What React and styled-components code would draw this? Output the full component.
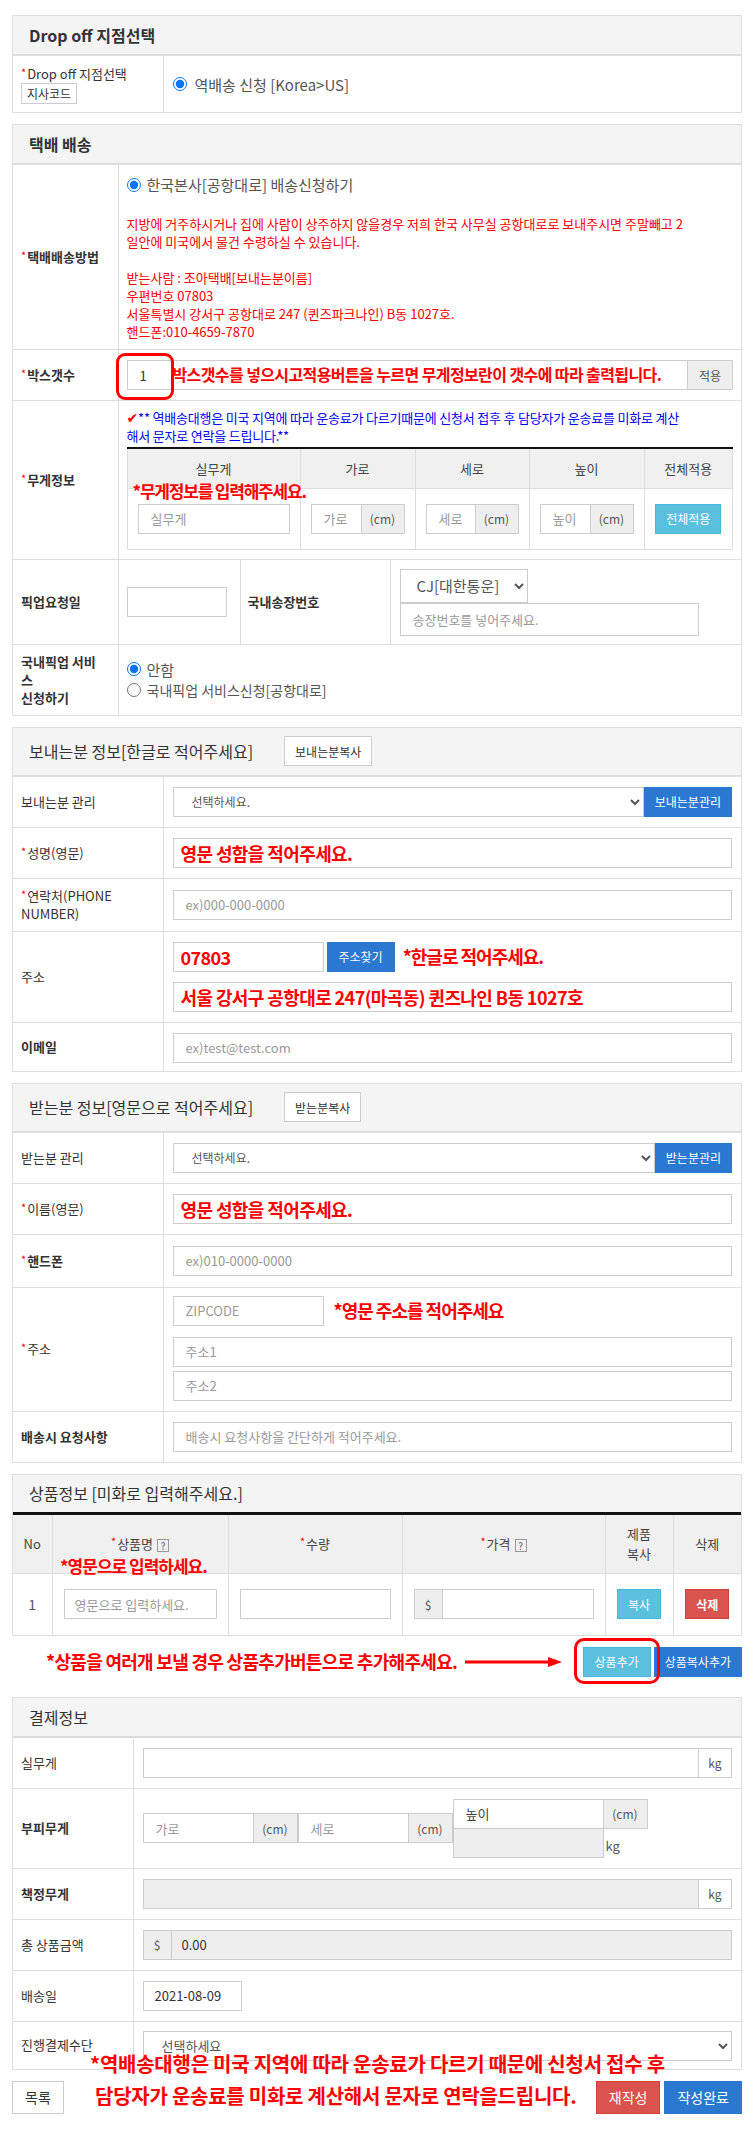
import React from "react";
import styled, { createGlobalStyle, css } from "styled-components";

const GlobalStyle = createGlobalStyle`
  *, *::before, *::after { box-sizing: border-box; }
  html, body { margin: 0; padding: 0; background: #fff; }
  body {
    font-family: "Noto Sans CJK KR", "Noto Sans", "Liberation Sans", sans-serif;
    font-size: 13px;
    color: #333;
  }
  input, select, button { font-family: inherit; margin: 0; }
`;

const Page = styled.div`
  padding: 15px 11px 21px 12px;
`;

const Panel = styled.section`
  position: relative;
  border: 1px solid #ddd;
  margin-bottom: 11px;
`;

const PanelHeader = styled.div`
  display: flex;
  align-items: center;
  gap: 31px;
  height: ${(p) => p.$h || 40}px;
  padding: 0 16px;
  background: #f4f4f4;
  border-bottom: ${(p) => (p.$dark ? "3px solid #111" : "2px solid #ddd")};
`;

const PanelTitle = styled.h2`
  margin: 0;
  font-size: 16px;
  font-weight: ${(p) => (p.$bold ? 700 : 400)};
  color: #333;
  white-space: nowrap;
`;

const FormTable = styled.table`
  width: 100%;
  border-collapse: collapse;
  table-layout: fixed;
`;

const Col = styled.col`
  width: ${(p) => p.$w}px;
`;

const cellBorders = css`
  border-top: 1px solid #ddd;
  border-left: 1px solid #ddd;
  &:first-child {
    border-left: 0;
  }
  tr:first-child > & {
    border-top: 0;
  }
`;

const Label = styled.th`
  ${cellBorders}
  padding: ${(p) => p.$pad || "8px"};
  text-align: left;
  vertical-align: middle;
  font-size: 13px;
  line-height: 18px;
  font-weight: ${(p) => (p.$bold ? 700 : 400)};
  color: #333;
`;

const Cell = styled.td`
  ${cellBorders}
  padding: ${(p) => p.$pad || "10px 9px"};
  vertical-align: middle;
`;

const Req = styled.span`
  color: #f00;
  font-size: 11px;
  font-weight: 400;
  vertical-align: top;
  line-height: 15px;
  margin-right: 1px;
`;

const CodeBox = styled.span`
  display: inline-block;
  height: 21px;
  line-height: 19px;
  padding: 0 5px;
  border: 1px solid #ccc;
  background: #fff;
  font-size: 12px;
  font-weight: 400;
  color: #333;
  vertical-align: top;
`;

const Radio = styled.input.attrs({ type: "radio" })`
  margin: 0;
  width: 14px;
  height: 14px;
  flex: none;
`;

const RadioLabel = styled.label`
  display: flex;
  align-items: center;
  gap: ${(p) => p.$gap || 7}px;
  font-size: ${(p) => p.$fs || 14}px;
  line-height: 21px;
  color: #555;
  white-space: nowrap;
`;

const RedNote = styled.p`
  margin: 20px 0 0;
  color: #f00;
  font-size: 13px;
  line-height: 18px;
  white-space: nowrap;
`;

const BlueNote = styled.p`
  margin: 0 0 2px;
  color: #0000ff;
  font-size: 13px;
  line-height: 18px;
  letter-spacing: -0.2px;
  white-space: nowrap;
`;

const Check = styled.span`
  color: #f00;
  font-family: "DejaVu Sans", sans-serif;
  font-size: 14px;
`;

const Input = styled.input`
  display: block;
  width: ${(p) => p.$w || "100%"};
  height: ${(p) => p.$h || 30}px;
  padding: 0 ${(p) => (p.$annot ? 7 : p.$px || 12)}px;
  border: 1px solid #ccc;
  border-radius: 0;
  background: ${(p) => (p.$grey ? "#eee" : "#fff")};
  font-size: ${(p) => (p.$annot ? 18 : 13)}px;
  font-weight: ${(p) => (p.$annot ? 700 : 400)};
  letter-spacing: ${(p) => (p.$annot ? "-0.6px" : "0")};
  color: ${(p) => (p.$annot ? "#f00" : "#333")};
  outline: none;
  flex: ${(p) => (p.$flex ? "1 1 0" : "none")};
  min-width: 0;
  margin-top: ${(p) => p.$mt || 0}px;
  &::placeholder {
    color: ${(p) => (p.$dark ? "#444" : "#999")};
  }
`;

const Select = styled.select`
  display: block;
  height: ${(p) => p.$h || 30}px;
  width: ${(p) => p.$w || "100%"};
  flex: ${(p) => (p.$flex ? "1 1 0" : "none")};
  min-width: 0;
  padding: 0 ${(p) => p.$px || 11}px;
  border: 1px solid #ccc;
  border-radius: 0;
  background: #fff;
  font-size: ${(p) => p.$fs || 12}px;
  color: #555;
  outline: none;
`;

const Group = styled.div`
  display: flex;
  flex: none;
  width: ${(p) => (p.$w ? `${p.$w}px` : "100%")};
  height: ${(p) => p.$h || 30}px;
  background: ${(p) => (p.$grey ? "#eee" : "transparent")};
`;

const Addon = styled.span`
  flex: none;
  display: flex;
  align-items: center;
  justify-content: center;
  width: ${(p) => p.$w}px;
  height: 100%;
  margin-left: ${(p) => (p.$lead ? 0 : -1)}px;
  border: 1px solid #ccc;
  ${(p) => p.$lead && "border-right: 0;"}
  background: ${(p) => (p.$white ? "#fff" : "#eee")};
  font-size: 12px;
  color: #555;
`;

const variants = {
  default: css`
    background: #fff;
    border-color: #ccc;
    color: #333;
  `,
  primary: css`
    background: #2b78d0;
    border-color: #2b78d0;
    color: #fff;
  `,
  info: css`
    background: #5bc0de;
    border-color: #46b8da;
    color: #fff;
  `,
  danger: css`
    background: #d9534f;
    border-color: #d43f3a;
    color: #fff;
  `,
};

const Button = styled.button`
  position: relative;
  flex: none;
  height: ${(p) => p.$h || 30}px;
  padding: 0 ${(p) => p.$px ?? 10}px;
  border: 1px solid;
  border-radius: 0;
  font-size: ${(p) => p.$fs || 12}px;
  font-weight: ${(p) => (p.$bold ? 700 : 400)};
  white-space: nowrap;
  cursor: pointer;
  margin-left: ${(p) => p.$ml || 0}px;
  ${(p) => variants[p.$variant || "default"]}
`;

const Annot = styled.span`
  color: #f00;
  font-weight: 700;
  font-size: ${(p) => p.$fs || 18}px;
  letter-spacing: ${(p) => p.$ls ?? -1}px;
  line-height: ${(p) => p.$lh || "1.2"};
  white-space: nowrap;
  margin-left: ${(p) => p.$ml || 0}px;
`;

const Overlay = styled(Annot)`
  position: absolute;
  left: ${(p) => p.$left}px;
  top: ${(p) => p.$top}px;
  z-index: 2;
  pointer-events: none;
`;

const Ring = styled.span`
  position: absolute;
  left: ${(p) => p.$l}px;
  top: ${(p) => p.$t}px;
  right: ${(p) => p.$r}px;
  bottom: ${(p) => p.$b}px;
  border: 3px solid #f00;
  border-radius: ${(p) => p.$rad || 9}px;
  pointer-events: none;
  z-index: 2;
`;

const Row = styled.div`
  display: flex;
  align-items: center;
  margin-top: ${(p) => p.$mt || 0}px;
`;

const Stack = styled.div`
  display: flex;
  flex-direction: column;
`;

/* 박스갯수 */
const BoxGroup = styled.div`
  display: flex;
  height: 30px;
`;
const BoxField = styled.div`
  flex: 1;
  display: flex;
  align-items: center;
  border: 1px solid #ccc;
  min-width: 0;
`;
const BoxCount = styled.span`
  position: relative;
  flex: none;
  width: 45px;
  height: 100%;
  display: flex;
  align-items: center;
  padding-left: 12px;
  font-size: 13px;
  color: #333;
`;

/* 무게정보 table */
const WeightWrap = styled.div`
  position: relative;
`;
const InnerTable = styled.table`
  width: 100%;
  border-collapse: collapse;
  table-layout: fixed;
`;
const InnerHead = styled.th`
  height: 40px;
  background: #f0f0f0;
  border: 1px solid #ddd;
  border-top: 2px solid #111;
  font-weight: 400;
  font-size: 13px;
  color: #444;
  text-align: center;
`;
const InnerCell = styled.td`
  height: 61px;
  border: 1px solid #ddd;
  padding: 0 10px;
  vertical-align: middle;
  text-align: ${(p) => (p.$center ? "center" : "left")};
`;

/* product table */
const ProductWrap = styled.div`
  position: relative;
`;
const ProductHead = styled.th`
  height: 59px;
  background: #f0f0f0;
  border-left: 1px solid #ddd;
  &:first-child {
    border-left: 0;
  }
  padding: 0 4px;
  font-weight: 400;
  font-size: 13px;
  line-height: 20px;
  color: #444;
  text-align: center;
`;
const ProductCell = styled.td`
  height: 61px;
  border-top: 1px solid #ddd;
  border-left: 1px solid #ddd;
  &:first-child {
    border-left: 0;
  }
  padding: 0 11px;
  text-align: center;
  vertical-align: middle;
  font-size: 14px;
  color: #555;
`;
const QIcon = styled.span`
  display: inline-flex;
  align-items: center;
  justify-content: center;
  width: 12px;
  height: 13px;
  margin-left: 4px;
  border: 1px solid #999;
  font-size: 10px;
  line-height: 1;
  color: #555;
  vertical-align: -1px;
`;

const ActionRow = styled.div`
  display: flex;
  align-items: center;
  height: 30px;
  margin-bottom: 20px;
  padding-left: 34px;
`;
const ActionButtons = styled.div`
  display: flex;
  margin-left: auto;
`;
const ArrowSvg = styled.svg`
  flex: none;
  margin-left: 8px;
`;

const KgText = styled.span`
  font-size: 13px;
  color: #555;
  margin-left: 2px;
  padding-top: 4px;
`;

const BottomBar = styled.div`
  position: relative;
  display: flex;
  align-items: center;
  justify-content: space-between;
  height: 33px;
`;
const BottomRight = styled.div`
  display: flex;
  gap: 4px;
`;
const BottomNote = styled.div`
  position: absolute;
  left: 78px;
  top: -33px;
  color: #f00;
  font-weight: 700;
  font-size: 20px;
  letter-spacing: -0.25px;
  line-height: 32px;
  white-space: nowrap;
  pointer-events: none;
`;
const NoteLine = styled.div`
  padding-left: ${(p) => p.$pl || 0}px;
`;

export default function App() {
  return (
    <>
      <GlobalStyle />
      <Page>
        {/* Drop off */}
        <Panel>
          <PanelHeader>
            <PanelTitle $bold>Drop off 지점선택</PanelTitle>
          </PanelHeader>
          <FormTable>
            <colgroup>
              <Col $w={150} />
              <col />
            </colgroup>
            <tbody>
              <tr>
                <Label $pad="9px 8px 8px">
                  <Req>*</Req>Drop off 지점선택
                  <br />
                  <CodeBox>지사코드</CodeBox>
                </Label>
                <Cell $pad="0 9px">
                  <RadioLabel $fs={15} $gap={8}>
                    <Radio name="dropoff" defaultChecked />
                    역배송 신청 [Korea&gt;US]
                  </RadioLabel>
                </Cell>
              </tr>
            </tbody>
          </FormTable>
        </Panel>

        {/* 택배 배송 */}
        <Panel>
          <PanelHeader>
            <PanelTitle $bold>택배 배송</PanelTitle>
          </PanelHeader>
          <FormTable>
            <colgroup>
              <Col $w={105} />
              <Col $w={122} />
              <Col $w={150} />
              <col />
            </colgroup>
            <tbody>
              <tr>
                <Label $bold>
                  <Req>*</Req>택배배송방법
                </Label>
                <Cell colSpan={3} $pad="9px 8px 8px">
                  <RadioLabel $fs={15} $gap={6}>
                    <Radio name="method" defaultChecked />
                    한국본사[공항대로] 배송신청하기
                  </RadioLabel>
                  <RedNote>
                    지방에 거주하시거나 집에 사람이 상주하지 않을경우 저희 한국 사무실 공항대로로 보내주시면 주말빼고 2
                    <br />
                    일안에 미국에서 물건 수령하실 수 있습니다.
                    <br />
                    <br />
                    받는사람 : 조아택배[보내는분이름]
                    <br />
                    우편번호 07803
                    <br />
                    서울특별시 강서구 공항대로 247 (퀸즈파크나인) B동 1027호.
                    <br />
                    핸드폰:010-4659-7870
                  </RedNote>
                </Cell>
              </tr>
              <tr>
                <Label $bold>
                  <Req>*</Req>박스갯수
                </Label>
                <Cell colSpan={3} $pad="10px 8px">
                  <BoxGroup>
                    <BoxField>
                      <BoxCount>
                        1
                        <Ring $l={-12} $t={-8} $r={-1} $b={-11} $rad={9} />
                      </BoxCount>
                      <Annot $fs={16} $ls={-0.6}>
                        박스갯수를 넣으시고적용버튼을 누르면 무게정보란이 갯수에 따라 출력됩니다.
                      </Annot>
                    </BoxField>
                    <Addon $w={46}>적용</Addon>
                  </BoxGroup>
                </Cell>
              </tr>
              <tr>
                <Label $bold>
                  <Req>*</Req>무게정보
                </Label>
                <Cell colSpan={3} $pad="8px 8px 9px">
                  <BlueNote>
                    <Check>✔</Check>** 역배송대행은 미국 지역에 따라 운송료가 다르기때문에 신청서 접후 후 담당자가 운송료를 미화로 계산
                    <br />
                    해서 문자로 연락을 드립니다.**
                  </BlueNote>
                  <WeightWrap>
                    <InnerTable>
                      <colgroup>
                        <Col $w={173} />
                        <Col $w={115} />
                        <Col $w={114} />
                        <Col $w={115} />
                        <col />
                      </colgroup>
                      <thead>
                        <tr>
                          <InnerHead>실무게</InnerHead>
                          <InnerHead>가로</InnerHead>
                          <InnerHead>세로</InnerHead>
                          <InnerHead>높이</InnerHead>
                          <InnerHead>전체적용</InnerHead>
                        </tr>
                      </thead>
                      <tbody>
                        <tr>
                          <InnerCell>
                            <Input placeholder="실무게" />
                          </InnerCell>
                          <InnerCell>
                            <Group>
                              <Input $flex placeholder="가로" />
                              <Addon $w={44}>(cm)</Addon>
                            </Group>
                          </InnerCell>
                          <InnerCell>
                            <Group>
                              <Input $flex placeholder="세로" />
                              <Addon $w={44}>(cm)</Addon>
                            </Group>
                          </InnerCell>
                          <InnerCell>
                            <Group>
                              <Input $flex placeholder="높이" />
                              <Addon $w={44}>(cm)</Addon>
                            </Group>
                          </InnerCell>
                          <InnerCell $center>
                            <Button $variant="info">전체적용</Button>
                          </InnerCell>
                        </tr>
                      </tbody>
                    </InnerTable>
                    <Overlay $left={6} $top={34} $fs={17} $ls={-1.2}>
                      *무게정보를 입력해주세요.
                    </Overlay>
                  </WeightWrap>
                </Cell>
              </tr>
              <tr>
                <Label $bold>픽업요청일</Label>
                <Cell $pad="9px 8px">
                  <Input $w="100px" />
                </Cell>
                <Label $bold $pad="8px 7px">
                  국내송장번호
                </Label>
                <Cell $pad="9px 8px 8px 9px">
                  <Select $w="128px" $h={34} $fs={15} $px={12} defaultValue="cj">
                    <option value="cj">CJ[대한통운]</option>
                  </Select>
                  <Input $w="299px" $h={33} placeholder="송장번호를 넣어주세요." />
                </Cell>
              </tr>
              <tr>
                <Label $bold>
                  국내픽업 서비
                  <br />
                  스
                  <br />
                  신청하기
                </Label>
                <Cell colSpan={3} $pad="8px 8px">
                  <Stack>
                    <RadioLabel $fs={15} $gap={6}>
                      <Radio name="pickup" defaultChecked />
                      안함
                    </RadioLabel>
                    <RadioLabel $fs={14} $gap={6}>
                      <Radio name="pickup" />
                      국내픽업 서비스신청[공항대로]
                    </RadioLabel>
                  </Stack>
                </Cell>
              </tr>
            </tbody>
          </FormTable>
        </Panel>

        {/* 보내는분 */}
        <Panel>
          <PanelHeader $h={49}>
            <PanelTitle>보내는분 정보[한글로 적어주세요]</PanelTitle>
            <Button>보내는분복사</Button>
          </PanelHeader>
          <FormTable>
            <colgroup>
              <Col $w={150} />
              <col />
            </colgroup>
            <tbody>
              <tr>
                <Label>보내는분 관리</Label>
                <Cell>
                  <Row>
                    <Select $flex $px={14} defaultValue="">
                      <option value="">선택하세요.</option>
                    </Select>
                    <Button $variant="primary">보내는분관리</Button>
                  </Row>
                </Cell>
              </tr>
              <tr>
                <Label>
                  <Req>*</Req>성명(영문)
                </Label>
                <Cell>
                  <Input $annot defaultValue="영문 성함을 적어주세요." />
                </Cell>
              </tr>
              <tr>
                <Label>
                  <Req>*</Req>연락처(PHONE
                  <br />
                  NUMBER)
                </Label>
                <Cell>
                  <Input placeholder="ex)000-000-0000" />
                </Cell>
              </tr>
              <tr>
                <Label>주소</Label>
                <Cell>
                  <Row>
                    <Input $annot $w="151px" defaultValue="07803" />
                    <Button $variant="primary" $ml={3} $px={11}>
                      주소찾기
                    </Button>
                    <Annot $ml={8}>*한글로 적어주세요.</Annot>
                  </Row>
                  <Input $annot $mt={10} defaultValue="서울 강서구 공항대로 247(마곡동) 퀸즈나인 B동 1027호" />
                </Cell>
              </tr>
              <tr>
                <Label $bold>이메일</Label>
                <Cell $pad="10px 9px 8px">
                  <Input placeholder="ex)test@test.com" />
                </Cell>
              </tr>
            </tbody>
          </FormTable>
        </Panel>

        {/* 받는분 */}
        <Panel>
          <PanelHeader $h={49}>
            <PanelTitle>받는분 정보[영문으로 적어주세요]</PanelTitle>
            <Button>받는분복사</Button>
          </PanelHeader>
          <FormTable>
            <colgroup>
              <Col $w={150} />
              <col />
            </colgroup>
            <tbody>
              <tr>
                <Label>받는분 관리</Label>
                <Cell>
                  <Row>
                    <Select $flex $px={14} defaultValue="">
                      <option value="">선택하세요.</option>
                    </Select>
                    <Button $variant="primary">받는분관리</Button>
                  </Row>
                </Cell>
              </tr>
              <tr>
                <Label>
                  <Req>*</Req>이름(영문)
                </Label>
                <Cell>
                  <Input $annot defaultValue="영문 성함을 적어주세요." />
                </Cell>
              </tr>
              <tr>
                <Label $bold>
                  <Req>*</Req>핸드폰
                </Label>
                <Cell $pad="11px 9px">
                  <Input placeholder="ex)010-0000-0000" />
                </Cell>
              </tr>
              <tr>
                <Label>
                  <Req>*</Req>주소
                </Label>
                <Cell $pad="8px 9px 10px">
                  <Row>
                    <Input $w="151px" placeholder="ZIPCODE" />
                    <Annot $ml={10}>*영문 주소를 적어주세요</Annot>
                  </Row>
                  <Input $mt={11} placeholder="주소1" />
                  <Input $mt={4} placeholder="주소2" />
                </Cell>
              </tr>
              <tr>
                <Label $bold>배송시 요청사항</Label>
                <Cell>
                  <Input placeholder="배송시 요청사항을 간단하게 적어주세요." />
                </Cell>
              </tr>
            </tbody>
          </FormTable>
        </Panel>

        {/* 상품정보 */}
        <Panel>
          <PanelHeader $h={40} $dark>
            <PanelTitle>상품정보 [미화로 입력해주세요.]</PanelTitle>
          </PanelHeader>
          <ProductWrap>
            <FormTable>
              <colgroup>
                <Col $w={39} />
                <Col $w={176} />
                <Col $w={174} />
                <Col $w={203} />
                <Col $w={68} />
                <col />
              </colgroup>
              <thead>
                <tr>
                  <ProductHead>No</ProductHead>
                  <ProductHead>
                    <Req>*</Req>상품명<QIcon>?</QIcon>
                  </ProductHead>
                  <ProductHead>
                    <Req>*</Req>수량
                  </ProductHead>
                  <ProductHead>
                    <Req>*</Req>가격<QIcon>?</QIcon>
                  </ProductHead>
                  <ProductHead>
                    제품
                    <br />
                    복사
                  </ProductHead>
                  <ProductHead>삭제</ProductHead>
                </tr>
              </thead>
              <tbody>
                <tr>
                  <ProductCell>1</ProductCell>
                  <ProductCell>
                    <Input placeholder="영문으로 입력하세요." $px={10} />
                  </ProductCell>
                  <ProductCell>
                    <Input />
                  </ProductCell>
                  <ProductCell>
                    <Group>
                      <Addon $lead $w={28}>
                        $
                      </Addon>
                      <Input $flex />
                    </Group>
                  </ProductCell>
                  <ProductCell>
                    <Button $variant="info">복사</Button>
                  </ProductCell>
                  <ProductCell>
                    <Button $variant="danger" $bold>
                      삭제
                    </Button>
                  </ProductCell>
                </tr>
              </tbody>
            </FormTable>
            <Overlay $left={47} $top={41} $fs={17} $ls={-1}>
              *영문으로 입력하세요.
            </Overlay>
          </ProductWrap>
        </Panel>

        <ActionRow>
          <Annot $fs={18} $ls={-0.7}>
            *상품을 여러개 보낼 경우 상품추가버튼으로 추가해주세요.
          </Annot>
          <ArrowSvg width="97" height="12" viewBox="0 0 97 12">
            <line x1="0" y1="6" x2="86" y2="6" stroke="#f00" strokeWidth="3" />
            <polygon points="83,1 97,6 83,11" fill="#f00" />
          </ArrowSvg>
          <ActionButtons>
            <Button $variant="info" $px={11}>
              상품추가
              <Ring $l={-10} $t={-10} $r={-10} $b={-8} $rad={10} />
            </Button>
            <Button $variant="primary" $ml={3}>
              상품복사추가
            </Button>
          </ActionButtons>
        </ActionRow>

        {/* 결제정보 */}
        <Panel>
          <PanelHeader>
            <PanelTitle>결제정보</PanelTitle>
          </PanelHeader>
          <FormTable>
            <colgroup>
              <Col $w={120} />
              <col />
            </colgroup>
            <tbody>
              <tr>
                <Label>실무게</Label>
                <Cell>
                  <Group>
                    <Input $flex />
                    <Addon $w={34} $white>
                      kg
                    </Addon>
                  </Group>
                </Cell>
              </tr>
              <tr>
                <Label $bold>부피무게</Label>
                <Cell $pad="10px 9px 10px">
                  <Row>
                    <Group $w={155}>
                      <Input $flex placeholder="가로" />
                      <Addon $w={45}>(cm)</Addon>
                    </Group>
                    <Group $w={155}>
                      <Input $flex placeholder="세로" />
                      <Addon $w={45}>(cm)</Addon>
                    </Group>
                    <Stack>
                      <Group $w={195} $h={30}>
                        <Input $flex $dark placeholder="높이" />
                        <Addon $w={45}>(cm)</Addon>
                      </Group>
                      <Row>
                        <Input $w="151px" $grey readOnly $mt={-1} />
                        <KgText>kg</KgText>
                      </Row>
                    </Stack>
                  </Row>
                </Cell>
              </tr>
              <tr>
                <Label $bold>책정무게</Label>
                <Cell>
                  <Group>
                    <Input $flex $grey readOnly />
                    <Addon $w={34} $white>
                      kg
                    </Addon>
                  </Group>
                </Cell>
              </tr>
              <tr>
                <Label>총 상품금액</Label>
                <Cell>
                  <Group $grey>
                    <Addon $lead $w={28}>
                      $
                    </Addon>
                    <Input $flex $grey $px={10} readOnly defaultValue="0.00" />
                  </Group>
                </Cell>
              </tr>
              <tr>
                <Label>배송일</Label>
                <Cell>
                  <Input $w="99px" $px={11} defaultValue="2021-08-09" />
                </Cell>
              </tr>
              <tr>
                <Label>진행결제수단</Label>
                <Cell $pad="9px 9px 8px">
                  <Select $px={14} $fs={13} defaultValue="">
                    <option value="">선택하세요</option>
                  </Select>
                </Cell>
              </tr>
            </tbody>
          </FormTable>
        </Panel>

        <BottomBar>
          <Button $h={33} $fs={14} $px={12}>
            목록
          </Button>
          <BottomNote>
            <NoteLine>*역배송대행은 미국 지역에 따라 운송료가 다르기 때문에 신청서 접수 후</NoteLine>
            <NoteLine $pl={5}>담당자가 운송료를 미화로 계산해서 문자로 연락을드립니다.</NoteLine>
          </BottomNote>
          <BottomRight>
            <Button $variant="danger" $h={33} $fs={14} $px={12}>
              재작성
            </Button>
            <Button $variant="primary" $h={33} $fs={14} $px={12}>
              작성완료
            </Button>
          </BottomRight>
        </BottomBar>
      </Page>
    </>
  );
}
